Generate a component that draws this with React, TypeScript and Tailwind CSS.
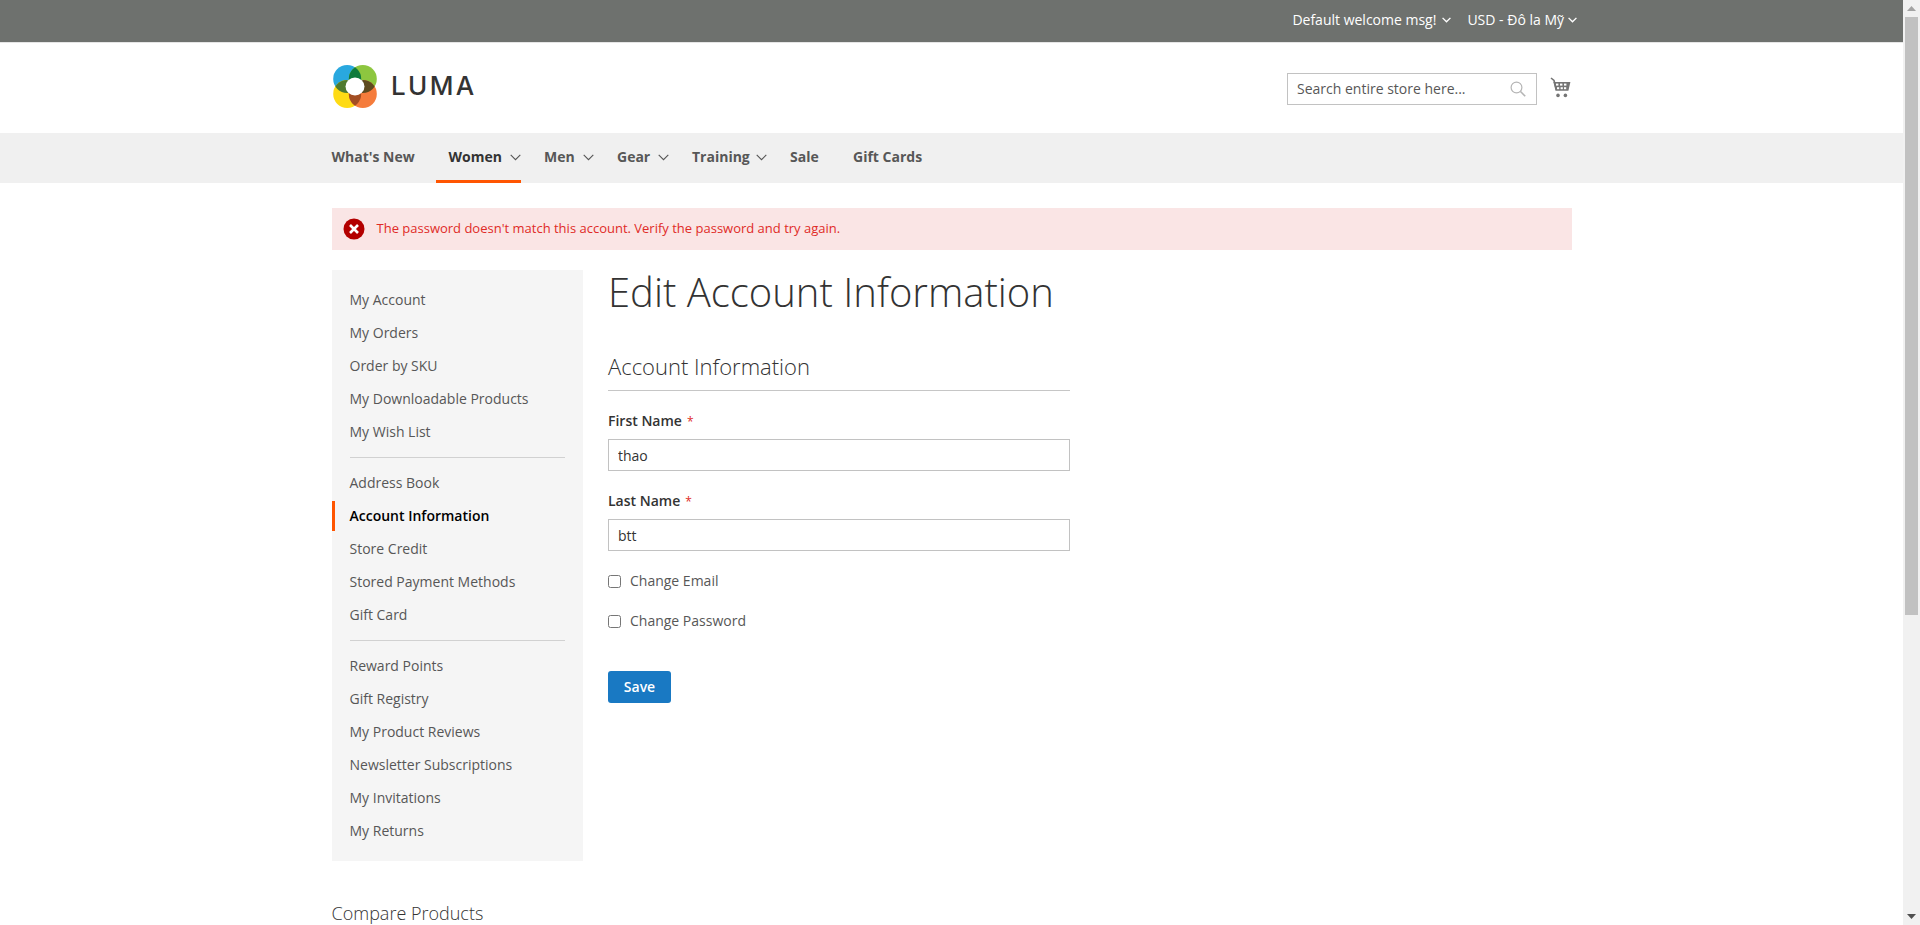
const sidebarGroups = [
  ["My Account", "My Orders", "Order by SKU", "My Downloadable Products", "My Wish List"],
  ["Address Book", "Account Information", "Store Credit", "Stored Payment Methods", "Gift Card"],
  ["Reward Points", "Gift Registry", "My Product Reviews", "Newsletter Subscriptions", "My Invitations", "My Returns"],
];

function Chevron({ className }: { className: string }) {
  return (
    <svg viewBox="0 0 11 7" fill="none" stroke="currentColor" strokeWidth="1.1" className={className}>
      <path d="M0.7 0.9 L5.5 5.7 L10.3 0.9" />
    </svg>
  );
}

function LumaLogo() {
  return (
    <div className="flex items-center">
      <svg width="44" height="43" viewBox="0 0 44 43" className="ml-[1px]">
        <defs>
          <clipPath id="petal-blue">
            <circle cx="14.2" cy="14" r="14" />
          </clipPath>
          <clipPath id="petal-orange">
            <circle cx="29.8" cy="29" r="14" />
          </clipPath>
        </defs>
        <circle cx="14.2" cy="14" r="14" fill="#29a8df" />
        <circle cx="29.8" cy="14" r="14" fill="#8dc63f" />
        <circle cx="14.2" cy="29" r="14" fill="#fedb15" />
        <circle cx="29.8" cy="29" r="14" fill="#f57c3c" />
        {/* overlaps between neighbouring petals */}
        <circle cx="29.8" cy="14" r="14" fill="#0f7a3c" clipPath="url(#petal-blue)" />
        <circle cx="14.2" cy="29" r="14" fill="#4f7a30" clipPath="url(#petal-blue)" />
        <circle cx="29.8" cy="14" r="14" fill="#5e4a1f" clipPath="url(#petal-orange)" />
        <circle cx="14.2" cy="29" r="14" fill="#a34e22" clipPath="url(#petal-orange)" />
        <ellipse cx="22" cy="21.5" rx="9.5" ry="9" fill="#fff" />
      </svg>
      <span className="mb-[1px] ml-[14.5px] font-['Inter',sans-serif] text-[26px] leading-none font-medium tracking-[2.4px] text-[#333]">
        LUMA
      </span>
    </div>
  );
}

function CartIcon() {
  return (
    <svg width="21" height="21" viewBox="0 0 21 21" className="text-[#757575]">
      <path d="M1 1 L4 3.5 L6.5 13" fill="none" stroke="currentColor" strokeWidth="1.6" />
      <path d="M3.4 5 H20.4 L18.4 13.8 H5.6 Z" fill="currentColor" />
      <g fill="#fff">
        <rect x="6" y="6.6" width="2.4" height="2" />
        <rect x="10" y="6.6" width="2.4" height="2" />
        <rect x="14" y="6.6" width="2.4" height="2" />
        <rect x="7" y="10.2" width="2.2" height="2" />
        <rect x="10.6" y="10.2" width="2.2" height="2" />
        <rect x="14" y="10.2" width="2.2" height="2" />
      </g>
      <circle cx="8" cy="18.4" r="1.8" fill="currentColor" />
      <circle cx="15.4" cy="18.4" r="1.8" fill="currentColor" />
    </svg>
  );
}

function Navigation() {
  return (
    <nav className="h-[50px] bg-[#f0f0f0]">
      <div className="mx-auto flex h-full w-[1240px] text-sm font-bold text-[#575757]">
        <a className="flex h-full w-[104.5px] items-center border-y-[3px] border-transparent pb-[2px]">What's New</a>
        <a className="flex h-full w-[85px] items-center justify-between border-y-[3px] border-t-transparent border-b-[#ff5501] pb-[2px] pl-[12.5px] text-[#333]">
          Women
          <Chevron className="h-[7px] w-[11px] text-[#555]" />
        </a>
        <a className="flex h-full w-[73px] items-center justify-between border-y-[3px] border-transparent pb-[2px] pl-[23px]">
          Men
          <Chevron className="h-[7px] w-[11px] text-[#555]" />
        </a>
        <a className="flex h-full w-[75px] items-center justify-between border-y-[3px] border-transparent pb-[2px] pl-[23px]">
          Gear
          <Chevron className="h-[7px] w-[11px] text-[#555]" />
        </a>
        <a className="flex h-full w-[98px] items-center justify-between border-y-[3px] border-transparent pb-[2px] pl-[23px]">
          Training
          <Chevron className="h-[7px] w-[11px] text-[#555]" />
        </a>
        <a className="flex h-full w-[86px] items-center border-y-[3px] border-transparent pb-[2px] pl-[23px]">Sale</a>
        <a className="flex h-full items-center border-y-[3px] border-transparent pb-[2px]">Gift Cards</a>
      </div>
    </nav>
  );
}

function Sidebar() {
  return (
    <aside className="w-[251px] shrink-0">
      <div className="bg-[#f5f5f5] py-[15px] text-sm leading-5 text-[#575757]">
        {sidebarGroups.map((group, i) => (
          <div key={i}>
            {i > 0 && <div className="mx-[18px] mt-[7px] mb-[10px] border-t border-[#d1d1d1]" />}
            <ul className="flex flex-col gap-[3px]">
              {group.map((item) =>
                item === "Account Information" ? (
                  <li key={item} className="border-l-[3px] border-[#ff5501] py-[5px] pl-[15px] font-semibold text-black">
                    {item}
                  </li>
                ) : (
                  <li key={item} className="border-l-[3px] border-transparent py-[5px] pl-[15px]">
                    {item}
                  </li>
                ),
              )}
            </ul>
            {i < sidebarGroups.length - 1 && <div className="h-[3px]" />}
          </div>
        ))}
      </div>
      <h2 className="mt-10 text-lg leading-6 font-light text-[#333]">Compare Products</h2>
    </aside>
  );
}

function TextField({ label, value }: { label: string; value: string }) {
  return (
    <div className="mt-5">
      <label className="block text-sm leading-5 font-semibold text-[#333]">
        {label}
        <span className="ml-[5px] text-xs font-normal text-[#e02b27]">*</span>
      </label>
      <input
        readOnly
        defaultValue={value}
        className="mt-2 block h-8 w-full border border-[#c2c2c2] bg-white px-[9px] text-sm text-[#333] outline-none"
      />
    </div>
  );
}

function AccountForm() {
  return (
    <main className="ml-[25.5px] w-[462px]">
      <h1 className="text-[40px] leading-[44px] font-light text-[#333]">Edit Account Information</h1>
      <h2 className="mt-10 border-b border-[#c6c6c6] pb-3 text-[22px] leading-6 font-light text-[#333]">
        Account Information
      </h2>
      <TextField label="First Name" value="thao" />
      <TextField label="Last Name" value="btt" />
      <label className="mt-5 flex h-5 items-center text-sm text-[#575757]">
        <input type="checkbox" className="m-0 h-[13px] w-[13px]" />
        <span className="ml-[9px]">Change Email</span>
      </label>
      <label className="mt-5 flex h-5 items-center text-sm text-[#575757]">
        <input type="checkbox" className="m-0 h-[13px] w-[13px]" />
        <span className="ml-[9px]">Change Password</span>
      </label>
      <button className="mt-10 h-8 w-[63px] rounded-[3px] bg-[#1979c3] text-sm font-semibold text-white">Save</button>
    </main>
  );
}

function Scrollbar() {
  return (
    <div className="flex w-[17px] shrink-0 flex-col bg-[#f1f1f1]">
      <div className="flex h-[17px] items-center justify-center">
        <svg width="9" height="5" viewBox="0 0 9 5">
          <path d="M4.5 0 L9 5 H0 Z" fill="#a3a3a3" />
        </svg>
      </div>
      <div className="mx-[2px] h-[598px] bg-[#c1c1c1]" />
      <div className="flex-1" />
      <div className="flex h-[17px] items-center justify-center">
        <svg width="9" height="5" viewBox="0 0 9 5">
          <path d="M0 0 H9 L4.5 5 Z" fill="#505050" />
        </svg>
      </div>
    </div>
  );
}

export default function App() {
  return (
    <div className="flex h-[925px] overflow-hidden bg-white font-['Open_Sans',sans-serif]">
      <div className="min-w-0 flex-1">
        <div className="h-[43px] border-b border-[#e5e5e5] bg-[#6e716e]">
          <div className="mx-auto flex h-[42px] w-[1240px] items-center justify-end pb-[2px] text-sm text-white">
            <span>Default welcome msg!</span>
            <Chevron className="ml-[6px] h-[6px] w-[9px] stroke-[1.7]" />
            <span className="ml-[16px]">USD - Đô la Mỹ</span>
            <Chevron className="mr-[-5.5px] ml-[4px] h-[6px] w-[9px] stroke-[1.7]" />
          </div>
        </div>

        <header className="mx-auto flex h-[90px] w-[1240px] items-start justify-between">
          <div className="mt-[22px]">
            <LumaLogo />
          </div>
          <div className="mt-[30px] mr-[0.5px] flex items-start">
            <div className="flex h-8 w-[250px] items-center justify-between border border-[#c2c2c2] pr-[10px] pl-[9px] text-sm text-[#575757]">
              <span>Search entire store here...</span>
              <svg width="16" height="16" viewBox="0 0 16 16" fill="none" stroke="#b5b5b5" strokeWidth="1.2">
                <circle cx="6.5" cy="6.5" r="5.4" />
                <path d="M10.5 10.5 L15.2 15.2" strokeWidth="1.6" />
              </svg>
            </div>
            <div className="mt-[4px] ml-[13px]">
              <CartIcon />
            </div>
          </div>
        </header>

        <Navigation />

        <div className="mx-auto w-[1240px]">
          <div className="mt-[25px] flex h-[42px] items-center bg-[#fae5e5] pl-[11px] text-[13px] text-[#e02b27]">
            <svg width="22" height="22" viewBox="0 0 22 22">
              <circle cx="11" cy="11" r="10.5" fill="#b30000" />
              <path d="M7 7 L15 15 M15 7 L7 15" stroke="#fff" strokeWidth="2.6" />
            </svg>
            <span className="ml-[12px]">The password doesn't match this account. Verify the password and try again.</span>
          </div>
          <div className="mt-5 flex">
            <Sidebar />
            <AccountForm />
          </div>
        </div>
      </div>
      <Scrollbar />
    </div>
  );
}
